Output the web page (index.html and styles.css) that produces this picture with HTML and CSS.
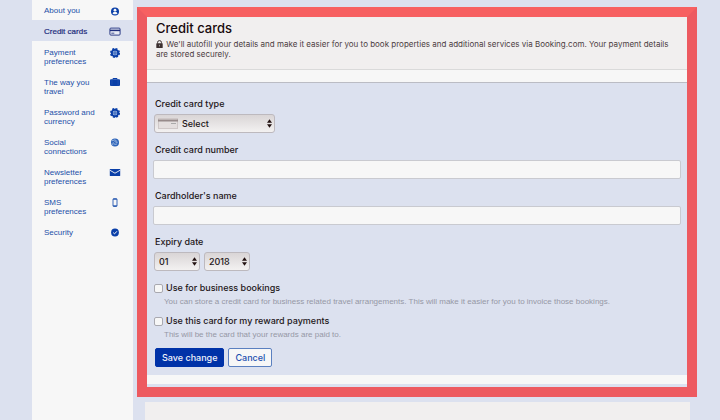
FILE: index.html
```html
<!DOCTYPE html>
<html lang="en">
<head>
  <meta charset="UTF-8">
  <meta name="viewport" content="width=device-width, initial-scale=1.0">
  <title>Credit cards</title>
  <link rel="stylesheet" href="styles.css">
</head>
<body>

  <div class="page">
    <aside class="sidebar">
      <nav class="menu">
        <a href="#about"><span>About you</span>
          <svg width="12" height="10" viewBox="0 0 12 10"><circle cx="6" cy="5.5" r="4" fill="#0a3fa8"/><circle cx="6" cy="4.2" r="1.4" fill="#f7f7f7"/><path d="M3.5 7.4Q3.8 5.7 6 5.7T8.5 7.4Q6 9.2 3.5 7.4Z" fill="#f7f7f7"/></svg>
        </a>
        <a href="#cards" class="active"><span>Credit cards</span>
          <svg width="12" height="9" viewBox="0 0 12 9"><rect x=".9" y="1.1" width="10.2" height="7" rx="1" fill="#e8ebf6" stroke="#1c2c7c" stroke-width=".9"/><path d="M1 3.4h10" stroke="#1c2c7c" stroke-width="1.5"/><path d="M2.3 6.2h3" stroke="#1c2c7c" stroke-width=".8"/></svg>
        </a>
        <a href="#payment"><span>Payment preferences</span>
          <svg width="12" height="10" viewBox="0 1 12 10"><circle cx="6" cy="6" r="4.3" fill="none" stroke="#0a3fa8" stroke-width="1.4" stroke-dasharray="2 1.38"/><circle cx="6" cy="6" r="3.2" fill="none" stroke="#0a3fa8" stroke-width="2"/><circle cx="6" cy="6" r="2" fill="#4f79c4"/></svg>
        </a>
        <a href="#travel"><span>The way you travel</span>
          <svg width="12" height="9" viewBox="0 1 12 9"><rect x="1" y="2.2" width="10" height="6.8" rx="1" fill="#0a3fa8"/><path d="M4 2.4V1.5h4v.9" fill="none" stroke="#0a3fa8"/><path d="M2.9 2.4v6.4M9.1 2.4v6.4" stroke="#3a67bd" stroke-width=".4"/></svg>
        </a>
        <a href="#password"><span>Password and currency</span>
          <svg width="12" height="10" viewBox="0 1 12 10"><circle cx="6" cy="6" r="4.3" fill="none" stroke="#0a3fa8" stroke-width="1.4" stroke-dasharray="2 1.38"/><circle cx="6" cy="6" r="3.2" fill="none" stroke="#0a3fa8" stroke-width="2"/><circle cx="6" cy="6" r="2" fill="#4f79c4"/></svg>
        </a>
        <a href="#social"><span>Social connections</span>
          <svg width="12" height="9" viewBox="0 0 12 9"><circle cx="6" cy="4.5" r="4" fill="#2b62b8"/><path d="M3 2.8l3-1 2.4 2M4 4.2l1.6 2.2L8 6M5.5 3.5l3 1.2M3 5.2l1.2 2" fill="none" stroke="#c9d8ee" stroke-width=".7"/></svg>
        </a>
        <a href="#newsletter"><span>Newsletter preferences</span>
          <svg width="12" height="9" viewBox="0 0 12 9"><rect x=".8" y="1" width="10.4" height="7" rx=".5" fill="#0a3fa8"/><path d="M.8 2.2L6 5.2l5.2-3" fill="none" stroke="#f7f7f7" stroke-width=".9"/></svg>
        </a>
        <a href="#sms"><span>SMS preferences</span>
          <svg width="12" height="9" viewBox="0 0 12 9"><rect x="4" y=".7" width="4" height="7.8" rx=".7" fill="#f7f7f7" stroke="#2557b0" stroke-width=".9"/><path d="M4 1.2h4M4 7.8h4" stroke="#2557b0"/></svg>
        </a>
        <a href="#security"><span>Security</span>
          <svg width="12" height="9" viewBox="0 0 12 9"><circle cx="6" cy="4.5" r="3.9" fill="#0a3fa8"/><path d="M4.2 4.6l1.3 1.3 2.4-2.6" fill="none" stroke="#f7f7f7" stroke-width="1"/></svg>
        </a>
      </nav>
    </aside>

    <main class="content">
      <section class="panel">
        <header class="panel-header">
          <h1>Credit cards</h1>
          <p>
            <svg class="lock" width="7" height="8" viewBox="0 0 7 8"><rect x=".3" y="3.3" width="6.4" height="4.7" rx=".5" fill="#3c3030"/><path d="M1.6 3.6V2.3a1.9 1.7 0 0 1 3.8 0v1.3" fill="none" stroke="#3c3030"/><path d="M3.5 4.8v1.6" stroke="#bbb" stroke-width=".7"/></svg>
            We'll autofill your details and make it easier for you to book properties and additional services via Booking.com. Your payment details are stored securely.
          </p>
        </header>
        <div class="strip"></div>

        <form class="card-form">
          <div class="field">
            <label for="cardType">Credit card type</label>
            <div class="select select-type">
              <select id="cardType"><option>Select</option></select>
              <svg class="card-icon" width="20" height="11" viewBox="0 0 20 11"><rect x=".5" y=".5" width="19" height="10" fill="#e4dfdf" stroke="#cfc8c8"/><path d="M0 2.5h20" stroke="#978b8b" stroke-width="2"/><path d="M13 5.5h5" stroke="#aaa"/></svg>
              <svg class="arrows" width="5" height="9" viewBox="0 0 5 9"><path d="M0 3.7L2.5.3 5 3.7zM0 5.3L2.5 8.7 5 5.3z" fill="#211"/></svg>
            </div>
          </div>

          <div class="field">
            <label for="cardNumber">Credit card number</label>
            <input type="text" id="cardNumber">
          </div>

          <div class="field">
            <label for="cardName">Cardholder's name</label>
            <input type="text" id="cardName">
          </div>

          <div class="field">
            <label for="month">Expiry date</label>
            <div class="expiry">
              <div class="select">
                <select id="month"><option>01</option></select>
                <svg class="arrows" width="5" height="9" viewBox="0 0 5 9"><path d="M0 3.7L2.5.3 5 3.7zM0 5.3L2.5 8.7 5 5.3z" fill="#211"/></svg>
              </div>
              <div class="select">
                <select id="year" aria-label="Expiry year"><option>2018</option></select>
                <svg class="arrows" width="5" height="9" viewBox="0 0 5 9"><path d="M0 3.7L2.5.3 5 3.7zM0 5.3L2.5 8.7 5 5.3z" fill="#211"/></svg>
              </div>
            </div>
          </div>

          <div class="check">
            <label><input type="checkbox">Use for business bookings</label>
            <p>You can store a credit card for business related travel arrangements. This will make it easier for you to invoice those bookings.</p>
          </div>

          <div class="check">
            <label><input type="checkbox">Use this card for my reward payments</label>
            <p>This will be the card that your rewards are paid to.</p>
          </div>

          <div class="buttons">
            <button type="submit" class="save">Save change</button>
            <button type="button" class="cancel">Cancel</button>
          </div>
        </form>
        <div class="panel-footer"></div>
      </section>

      <section class="next-panel"></section>
    </main>
  </div>

</body>
</html>
```
FILE: styles.css
```css
* {
  box-sizing: border-box;
}

body {
  margin: 0;
  font-family: Inter, "Liberation Sans", sans-serif;
  background-color: #dce1ef;
  color: #231618;
  overflow: hidden;
}

h1, p {
  margin: 0;
}

.page {
  display: flex;
  min-height: 100vh;
  padding: 0 23px 0 32px;
}

/* Sidebar */
.sidebar {
  width: 101px;
  flex-shrink: 0;
  background-color: #f7f7f7;
}

.menu {
  margin-top: -1px;
}

.menu a {
  display: flex;
  justify-content: space-between;
  align-items: flex-start;
  padding: 7px 12px 5px;
  font-family: "Liberation Sans", sans-serif;
  font-size: 8px;
  line-height: 9px;
  color: #1d50a8;
  text-decoration: none;
}

.menu span {
  width: 56px;
}

.menu svg {
  flex-shrink: 0;
  margin-bottom: -3px;
}

.menu .active {
  background-color: #dce1ef;
  color: #1c2c7c;
  -webkit-text-stroke: 0.2px #1c2c7c;
}

/* Main panel */
.content {
  flex: 1;
  display: flex;
  flex-direction: column;
  padding: 7px 0 0 4px;
}

.panel {
  border: 10px solid #ed5a60;
  border-top-color: #f76061;
}

.panel-header {
  height: 52px;
  padding: 2px 9px;
  background-color: #f1efef;
}

.panel-header h1 {
  font-size: 13px;
  line-height: 18px;
  font-weight: 500;
  color: #180a0c;
}

.panel-header p {
  margin-top: 2px;
  font-size: 8px;
  line-height: 10px;
  color: #4c3d3f;
}

.lock {
  margin-right: 1px;
  vertical-align: -1px;
}

.strip {
  height: 14px;
  background-color: #f7f7f7;
  border-top: 1px solid #dadada;
  border-bottom: 1px solid #bbbcc4;
}

/* Form */
.card-form {
  padding: 15px 6px 8px;
}

.field {
  margin-bottom: 11px;
}

.field label {
  display: block;
  margin: 0 2px 4px;
}

.field label,
.check label,
.select select {
  font-size: 9px;
  line-height: 12px;
  font-weight: 500;
}

.field input {
  display: block;
  width: 100%;
  height: 19px;
  padding: 0 5px;
  font: inherit;
  font-size: 9px;
  background-color: #f7f7f7;
  border: 1px solid #c9cad0;
  border-radius: 2px;
}

.select {
  position: relative;
  width: 46px;
  height: 19px;
}

.select select {
  display: block;
  appearance: none;
  width: 100%;
  height: 100%;
  padding: 0 4px;
  font-family: inherit;
  color: #231618;
  background: linear-gradient(#d9d5d6, #f3f1f1);
  border: 1px solid #bdb9be;
  border-radius: 3px;
}

.select-type {
  width: 121px;
  margin-left: 1px;
}

.select-type select {
  padding-left: 27px;
}

.card-icon {
  position: absolute;
  top: 4px;
  left: 4px;
  pointer-events: none;
}

.arrows {
  position: absolute;
  top: 5px;
  right: 3px;
  pointer-events: none;
}

.expiry {
  display: flex;
  gap: 4px;
  margin-left: 1px;
}

.check {
  margin-bottom: 8px;
}

.check label {
  display: flex;
  align-items: center;
  gap: 3px;
  margin-left: 1px;
}

.check input {
  appearance: none;
  width: 9px;
  height: 9px;
  margin: 0;
  background-color: #f7f7f7;
  border: 1px solid #a9a9b0;
  border-radius: 2px;
}

.check input:checked {
  background-color: #0032a8;
}

.check p {
  margin: 3px 0 0 11px;
  font-family: "Liberation Sans", sans-serif;
  font-size: 8px;
  line-height: 10px;
  color: #9698a6;
}

.buttons {
  display: flex;
  gap: 4px;
  margin-left: 2px;
}

.buttons button {
  height: 19px;
  padding: 0 6px;
  font-family: inherit;
  font-size: 9px;
  font-weight: 500;
  border: 1px solid #0032a8;
  border-radius: 2px;
  cursor: pointer;
}

.save {
  background-color: #0032a8;
  color: #f0f3fb;
}

.buttons .cancel {
  background-color: #f7f7f7;
  border-color: #5b80c0;
  color: #1d50b0;
}

.panel-footer {
  height: 9px;
  background-color: #f7f7f7;
  margin-bottom: 3px;
}

.next-panel {
  flex: 1;
  min-height: 18px;
  margin: 5px 7px 0 8px;
  background-color: #f1efef;
}
```
